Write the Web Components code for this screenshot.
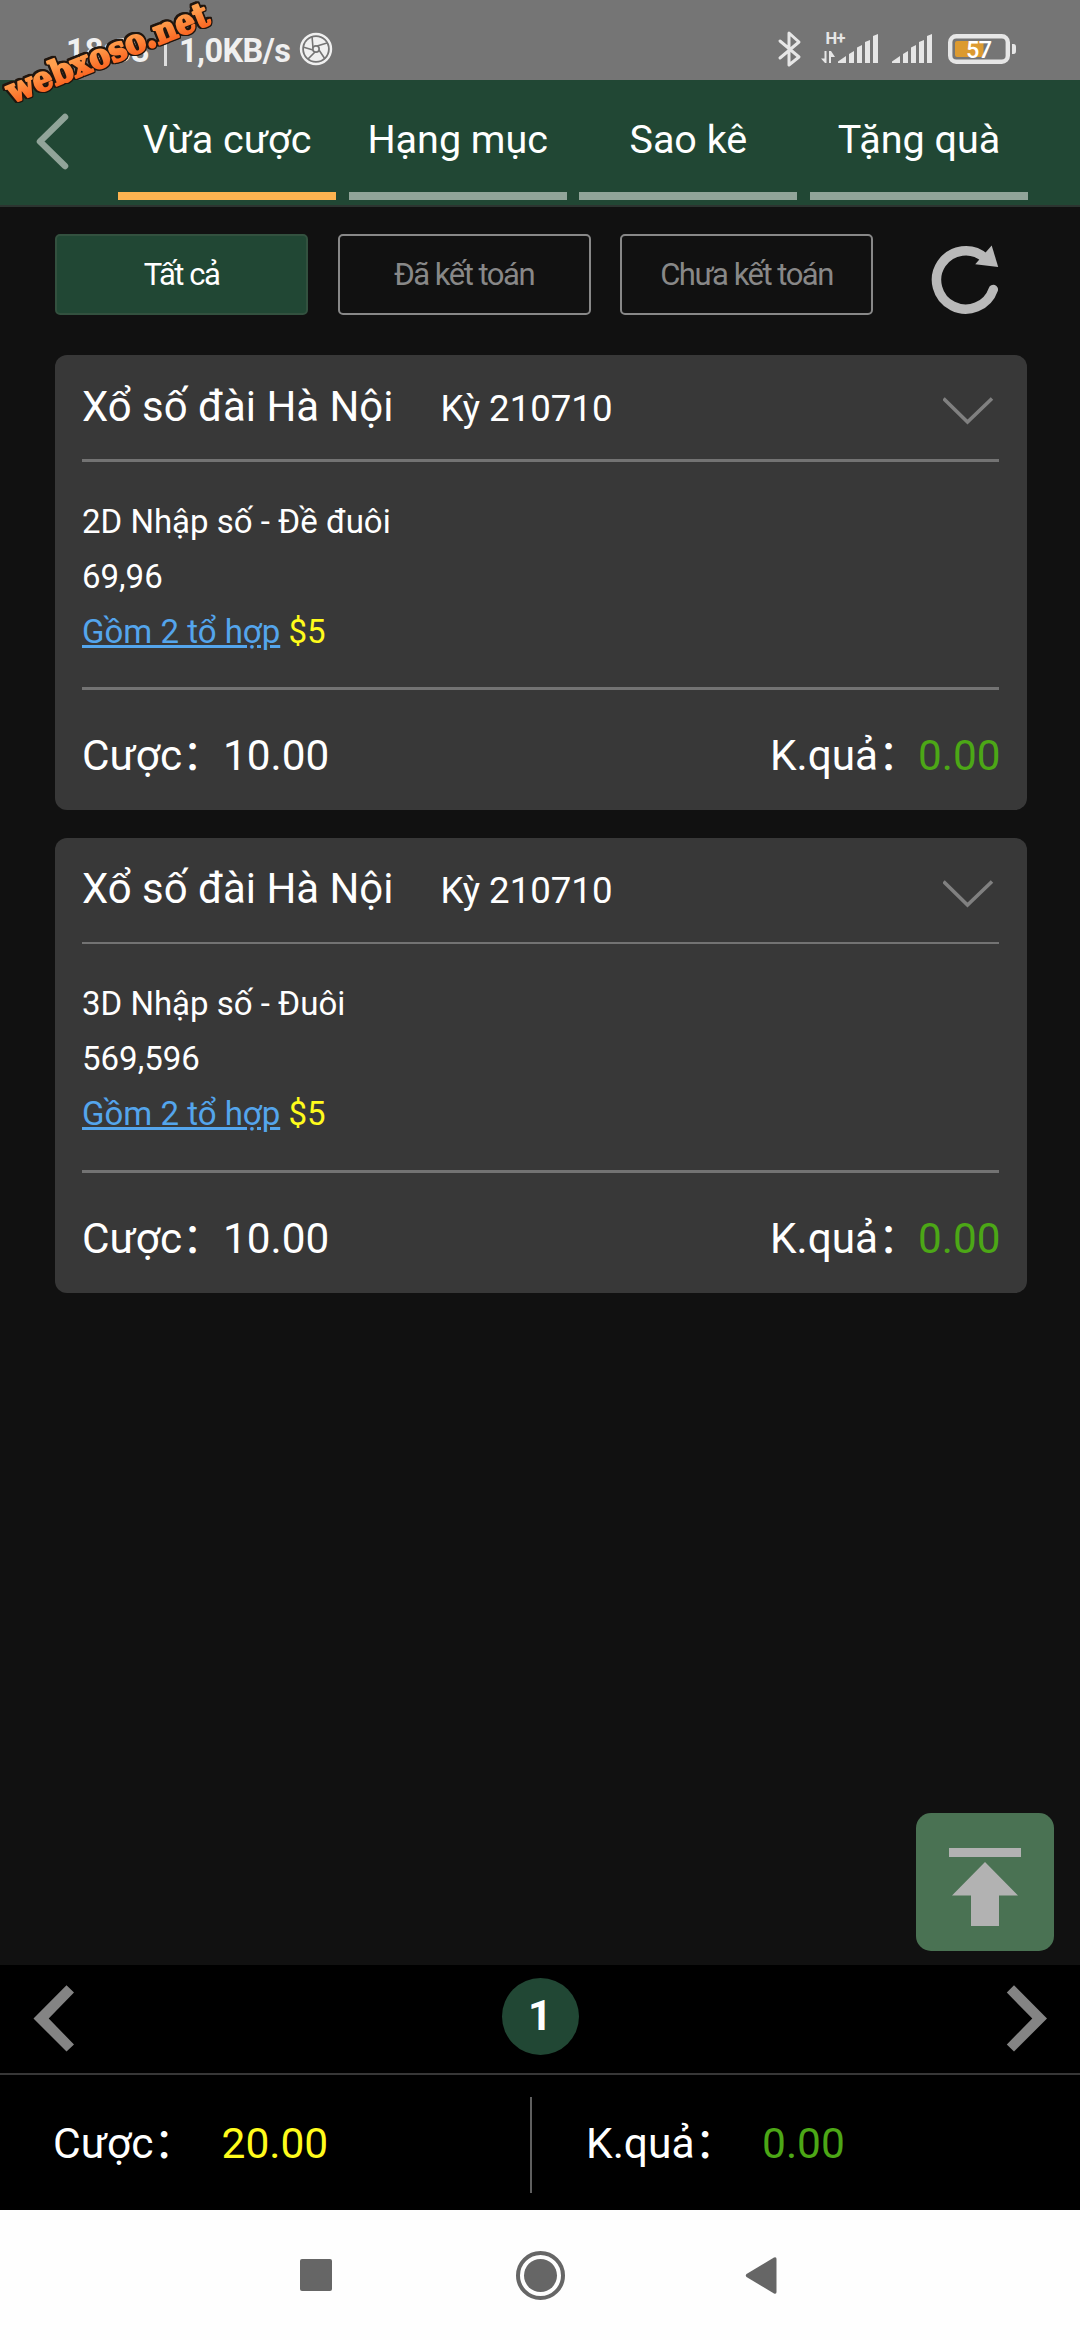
<!DOCTYPE html>
<html lang="vi">
<head>
<meta charset="utf-8">
<title>Vừa cược</title>
<style>
html,body{margin:0;background:#111}
body{width:1080px;height:2340px;overflow:hidden;font-family:Roboto,"Noto Sans CJK SC",sans-serif;color:#fff}
</style>
</head>
<body>
<lottery-app></lottery-app>
<script>
const define = (name, markup) => {
  const template = document.createElement('template');
  template.innerHTML = markup;
  customElements.define(name, class extends HTMLElement {
    constructor() {
      super();
      this.attachShadow({mode: 'open'}).append(template.content.cloneNode(true));
    }
  });
};

define('status-bar', `
<style>
:host{display:flex;flex:none;box-sizing:border-box;height:80px;background:#757575;color:#f0f0f0;padding:0 63px 0 66px;align-items:center;justify-content:space-between}
.left{display:flex;align-items:center;font:700 32.500px/40px Roboto,sans-serif;white-space:nowrap}
.time{width:98px;margin-top:22px}
.bar{background:#dedede;width:3px;height:27px;margin:25px 12px 0 0}
.rate{width:120px;margin-top:22px;letter-spacing:-.6px}
.left svg{margin-top:18px}
svg{display:block}
</style>
<div class="left"><span class="time">18:33</span><span class="bar"></span><span class="rate">1,0KB/s</span>
<svg width="34" height="34" viewBox="0 0 34 34"><circle cx="17" cy="17" r="15" fill="none" stroke="#f0f0f0" stroke-width="2.400"/><circle cx="17" cy="17" r="12" fill="#f0f0f0"/><g stroke="#757575" stroke-width="1.600"><path d="M14 16 13 4M18 14 28 11M20 18 26 27M16 20 9 27M14 18 4 15"/></g><circle cx="17" cy="17" r="4" fill="#757575"/><circle cx="17" cy="17" r="2.300" fill="#f0f0f0"/></svg></div>
<svg width="240" height="80" viewBox="777 0 240 80" fill="#e6e6e6" font-family="Roboto,sans-serif">
<path d="M780 41 799 57 789 65V33L799 42 780 58" fill="none" stroke="#e6e6e6" stroke-width="3" stroke-linejoin="round" stroke-linecap="round"/>
<text x="825.500" y="44" font-size="16.500" font-weight="700" textLength="20">H+</text>
<path d="M821 58.500 824.500 58.500V51H826.500V63H825ZM829 51H831L835 57H831V63H829Z"/>
<path d="M838 63V61.500L846 56V63ZM849 63V54L854 51V63ZM857 63V47.500L862 45V63ZM865 63V42L870 40V63ZM873 63V36L878 34V63Z"/>
<path transform="translate(54 0)" d="M838 63V61.500L846 56V63ZM849 63V54L854 51V63ZM857 63V47.500L862 45V63ZM865 63V42L870 40V63ZM873 63V36L878 34V63Z"/>
<rect x="950.200" y="36.200" width="57.600" height="25.600" rx="6" fill="none" stroke="#e6e6e6" stroke-width="4.400"/>
<rect x="955" y="41" width="28.500" height="16" rx="2" fill="#dc9a30"/>
<path d="M1012 44h1.500q2.500 0 2.500 3v4q0 3-2.500 3H1012Z"/>
<text x="966" y="58" font-size="23.500" font-weight="500" fill="#fff" textLength="26">57</text>
</svg>`);

define('tab-item', `
<style>
:host{display:flex;flex-direction:column;flex:1;box-sizing:border-box;padding-top:7px;text-align:center;font-size:39.500px;line-height:105px;white-space:nowrap}
.line{height:8px;background:#91a499}
:host([active]) .line{background:#fdb350}
</style><div><slot></slot></div><div class="line"></div>`);

define('tab-bar', `
<style>
:host{display:flex;flex:none;box-sizing:border-box;height:127px;background:#214734;border-bottom:2px solid #2c3430}
svg{width:118px;height:125px;flex:none}
.tabs{display:flex;flex:1;gap:12.670px;padding-right:52px}
</style>
<svg viewBox="0 0 118 125"><path d="M65 37 40 61.500 65 86" fill="none" stroke="#91a499" stroke-width="6.500" stroke-linecap="round" stroke-linejoin="round"/></svg>
<div class="tabs"><tab-item active>Vừa cược</tab-item><tab-item>Hạng mục</tab-item><tab-item>Sao kê</tab-item><tab-item>Tặng quà</tab-item></div>`);

define('filter-chip', `
<style>
:host{box-sizing:border-box;display:block;width:253px;height:81px;border:2px solid #888;border-radius:5px;color:#888;font-size:31px;line-height:77px;text-align:center;letter-spacing:-1.500px}
:host([active]){background:#214734;border-color:#33513f;color:#fff}
</style><slot></slot>`);

define('filter-row', `
<style>
:host{display:flex;flex:none;gap:29.500px;padding:27px 0 40px 55px}
svg{width:81px;height:81px;margin-left:22px}
</style>
<filter-chip active>Tất cả</filter-chip><filter-chip>Đã kết toán</filter-chip><filter-chip>Chưa kết toán</filter-chip>
<svg viewBox="925 234 81 81"><path d="M985 258A29.200 29.200 0 1 0 993.300 289.500" fill="none" stroke="#b9b9b9" stroke-width="9.500" stroke-linecap="round"/><path d="M991.700 245.500 998.200 267 975.200 264.300Z" fill="#b9b9b9"/></svg>`);

define('bet-card', `
<style>
:host{display:flex;flex:none;flex-direction:column;box-sizing:border-box;height:455px;margin:0 53px 28px 55px;padding:0 28px 0 27px;background:#383838;border-radius:12px}
.head{display:flex;height:104px;line-height:var(--head,103px);font-size:41.900px}
.name{width:358.500px;white-space:nowrap}
.issue{flex:1;font-size:36.600px;line-height:calc(var(--head,103px) + 4px)}
.head svg{width:56px;height:104px}
hr{margin:0;border:0;height:3px;background:#737373;flex:none}
.first{height:var(--rule,3px)}
.body{box-sizing:border-box;height:calc(228px - var(--rule,3px));padding-top:var(--lead,32px);font-size:33px;line-height:55px}
a{color:#54a5ec;text-decoration:underline;text-decoration-thickness:3px}
.unit{color:#fffb1c}
.foot{display:flex;height:120px;line-height:131px;font-size:42.300px;white-space:nowrap}
.k{width:141px}.k.r{margin-left:auto;width:148px}
.res{color:#4ca716;width:81px}
</style>
<div class="head"><span class="name">Xổ số đài Hà Nội</span><span class="issue">Kỳ 210710</span>
<svg viewBox="0 0 56 104"><path d="M.5 43.500 24.500 67 49 43.500" fill="none" stroke="#808080" stroke-width="3.600"/></svg></div>
<hr class="first">
<div class="body"><div><slot name="play"></slot></div><div><slot name="numbers"></slot></div><div><a>Gồm 2 tổ hợp</a> <span class="unit">$5</span></div></div>
<hr>
<div class="foot"><span class="k">Cược：</span><span>10.00</span><span class="k r">K.quả：</span><span class="res">0.00</span></div>`);

define('scroll-top', `
<style>:host{display:block;flex:none;width:138px;height:138px;border-radius:15px;background:#4a7253;margin:auto 26px 14px auto}svg{display:block}</style>
<svg width="138" height="138" viewBox="916 1813 138 138" fill="#b2b2b2"><path d="M949 1848h72v9h-72zM985 1862 1018 1895.500H999V1926H971V1895.500H952Z"/></svg>`);

define('pager-bar', `
<style>
:host{display:flex;flex:none;box-sizing:border-box;height:110px;background:#000;border-bottom:2px solid #373737;justify-content:space-between;align-items:flex-start;padding:13px 33px}
svg{width:41px;height:80px}
.page{width:77px;height:77px;border-radius:50%;background:#214734;text-align:center;font-weight:700;font-size:42px;line-height:75px}
</style>
<svg viewBox="33 1978 41 80" fill="#848484"><path d="M33.500 2018.500 66.500 1985.300 74 1992.500 48.700 2018.500 74 2044.500 66.500 2051.500Z"/></svg>
<span class="page">1</span>
<svg viewBox="1006 1978 41 80" fill="#848484"><path d="M1047 2018.500 1014 1985.300 1006.800 1992.500 1032.300 2018.500 1006.800 2044.500 1014 2051.500Z"/></svg>`);

define('totals-bar', `
<style>
:host{display:flex;flex:none;height:135px;background:#000;font-size:42.500px;line-height:137px;white-space:nowrap}
.half{display:flex;box-sizing:border-box;padding-left:53px;width:530px}
.k{width:168.500px}.b .k{width:176px}
.half.b{padding-left:54px}
.bet{color:#fffb1c}.res{color:#4ca716}
.div{width:2px;height:96px;margin-top:22px;background:#5f5f5f}
</style>
<div class="half"><span class="k">Cược：</span><span class="bet">20.00</span></div><i class="div"></i>
<div class="half b"><span class="k">K.quả：</span><span class="res">0.00</span></div>`);

define('nav-bar', `
<style>:host{display:flex;flex:none;box-sizing:border-box;height:130px;background:#fefefe;align-items:flex-start;padding:41px 303px 0 300px;justify-content:space-between}svg{display:block}</style>
<svg width="32" height="49" fill="#666"><rect y="8" width="32" height="32" rx="2"/></svg>
<svg width="49" height="49" style="margin-left:3px"><circle cx="24.500" cy="24.500" r="22.500" fill="none" stroke="#666" stroke-width="4"/><circle cx="24.500" cy="24.500" r="16.500" fill="#666"/></svg>
<svg width="32" height="49" fill="#666"><path d="M1.500 23 29 6.500Q31.500 5.500 31.500 8V41Q31.500 43.500 29 42.500L1.500 26Q0 24.500 1.500 23Z"/></svg>`);

define('site-stamp', `
<style>:host{position:absolute;left:0;top:0;width:230px;height:120px}
svg{display:block;filter:drop-shadow(1.200px 0 0 #20160f) drop-shadow(-1.200px 0 0 #20160f) drop-shadow(0 1.200px 0 #20160f) drop-shadow(0 -1.200px 0 #20160f)}</style>
<svg width="230" height="120" viewBox="0 0 230 120"><defs><linearGradient id="g" x1="0" y1="0" x2="0" y2="1"><stop offset=".3" stop-color="#ffa04e"/><stop offset=".85" stop-color="#fb6420"/></linearGradient></defs>
<text transform="translate(12 103.500) rotate(-21.800)" font-family="'DejaVu Serif',serif" font-weight="700" font-size="34" textLength="215" lengthAdjust="spacingAndGlyphs" fill="url(#g)" stroke="url(#g)" stroke-width="2" stroke-linejoin="round">webxoso.net</text></svg>`);

define('lottery-app', `
<style>:host{display:flex;flex-direction:column;position:relative;width:1080px;height:2340px;background:#111}
.page{display:flex;flex:none;flex-direction:column;height:1758px}</style>
<status-bar></status-bar>
<tab-bar></tab-bar>
<div class="page">
<filter-row></filter-row>
<bet-card><span slot="play">2D Nhập số - Đề đuôi</span><span slot="numbers">69,96</span></bet-card>
<bet-card style="--rule:2px;--lead:32px;--head:101px"><span slot="play">3D Nhập số - Đuôi</span><span slot="numbers">569,596</span></bet-card>
<scroll-top></scroll-top>
</div>
<pager-bar></pager-bar>
<totals-bar></totals-bar>
<nav-bar></nav-bar>
<site-stamp></site-stamp>`);
</script>
</body>
</html>
